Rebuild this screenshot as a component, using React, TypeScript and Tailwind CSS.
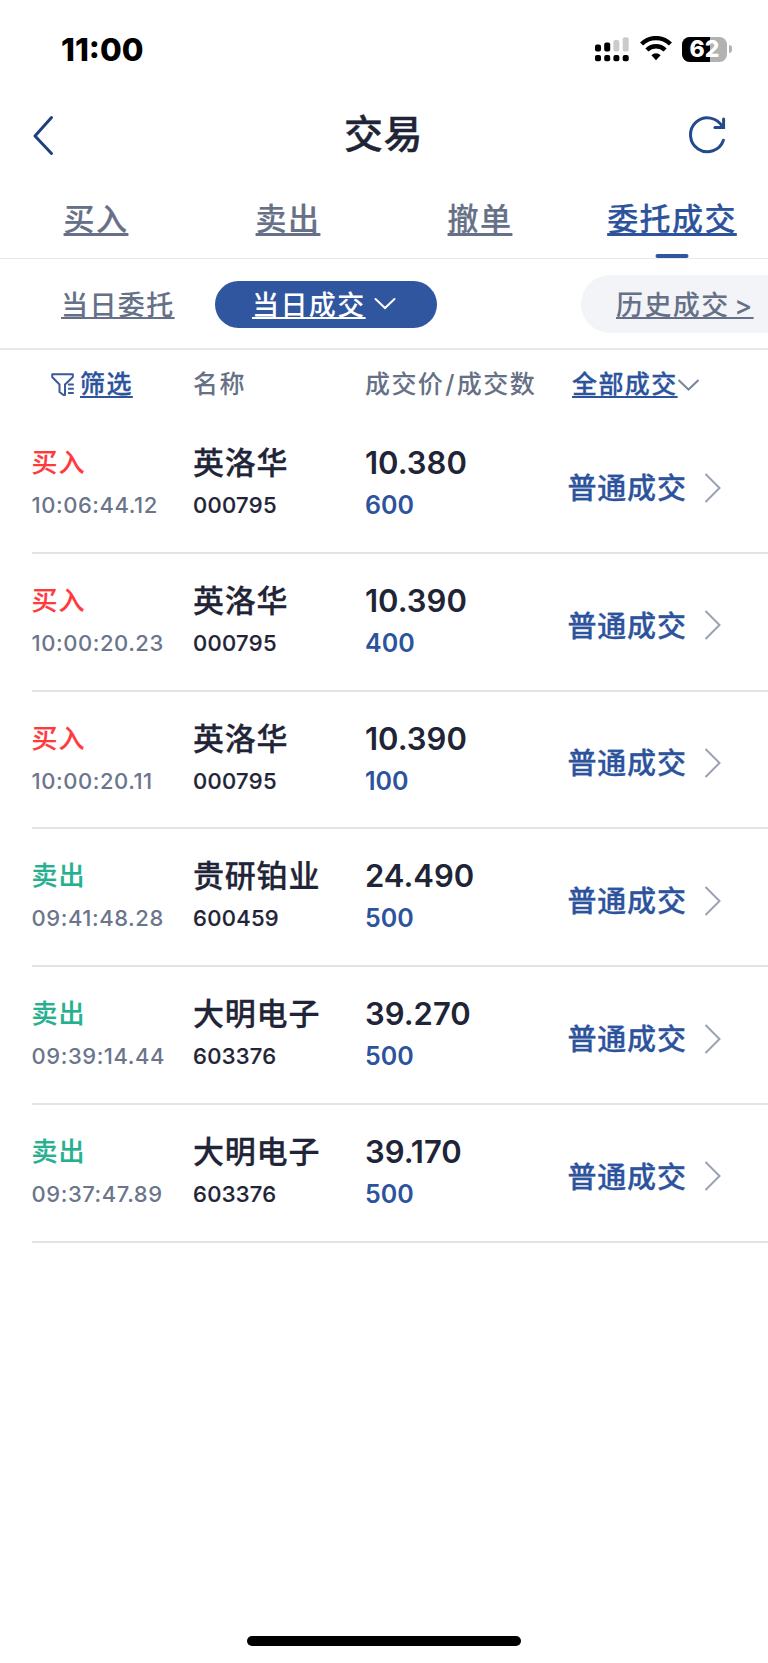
import clsx from 'clsx';

type Trade = {
  side: 'buy' | 'sell';
  time: string;
  name: string;
  code: string;
  price: string;
  amount: number;
};

const trades: Trade[] = [
  { side: 'buy', time: '10:06:44.12', name: '英洛华', code: '000795', price: '10.380', amount: 600 },
  { side: 'buy', time: '10:00:20.23', name: '英洛华', code: '000795', price: '10.390', amount: 400 },
  { side: 'buy', time: '10:00:20.11', name: '英洛华', code: '000795', price: '10.390', amount: 100 },
  { side: 'sell', time: '09:41:48.28', name: '贵研铂业', code: '600459', price: '24.490', amount: 500 },
  { side: 'sell', time: '09:39:14.44', name: '大明电子', code: '603376', price: '39.270', amount: 500 },
  { side: 'sell', time: '09:37:47.89', name: '大明电子', code: '603376', price: '39.170', amount: 500 },
];

const tabs = ['买入', '卖出', '撤单', '委托成交'];

function StatusBar() {
  return (
    <div className="flex h-[98px] items-center justify-between pl-[61px] pr-[36px]">
      <span className="pt-px text-[31.5px] font-extrabold leading-none text-black">11:00</span>
      <div className="flex items-center gap-[10.5px]">
        <svg width="34" height="26" viewBox="0 0 34 26">
          <rect x="0" y="8.5" width="6" height="7" rx="2" />
          <rect x="9.2" y="6.5" width="6" height="9" rx="2" />
          <rect x="18.4" y="4" width="6" height="11.5" rx="2" fill="#cbcbcb" />
          <rect x="27.7" y="1.2" width="6" height="14.3" rx="2" fill="#cbcbcb" />
          <rect x="0" y="19" width="6" height="6.3" rx="2" />
          <rect x="9.2" y="19" width="6" height="6.3" rx="2" />
          <rect x="18.4" y="19" width="6" height="6.3" rx="2" />
          <rect x="27.7" y="19" width="6" height="6.3" rx="2" />
        </svg>
        <svg width="32" height="26" viewBox="0 0 32 26" fill="none" stroke="#000" strokeWidth="4.4">
          <path d="M1.6 8a20.5 20.5 0 0 1 28.8 0" />
          <path d="M6.9 14a13 13 0 0 1 18.2 0" />
          <path d="M16 24.2l-4.6-5a6.5 6.5 0 0 1 9.2 0z" fill="#000" stroke="none" />
        </svg>
        <div className="flex items-center gap-[2px]">
          <div className="flex h-[25px] w-[45px] items-center justify-center rounded-[7.5px] bg-[linear-gradient(to_right,#000_62%,#b2b2b2_62%)] text-[23px] font-extrabold leading-none text-white">
            62
          </div>
          <div className="h-[8px] w-[3px] rounded-r-full bg-[#b2b2b2]" />
        </div>
      </div>
    </div>
  );
}

function Header() {
  return (
    <header className="grid h-[74px] grid-cols-[1fr_auto_1fr] items-center pl-[31px] pr-[40px]">
      <svg width="26" height="42" viewBox="0 0 26 42" fill="none" stroke="#1f3f7d" strokeWidth="3" strokeLinecap="round" strokeLinejoin="round">
        <path d="M20.5 3.5L4 22L20.5 39.5" />
      </svg>
      <h1 className="pb-[3px] pl-[8px] text-[39px] font-medium leading-none tracking-[0.5px] text-[#1f2437] [-webkit-text-stroke:0.4px]">
        交易
      </h1>
      <svg className="justify-self-end" width="42" height="42" viewBox="0 0 42 42" fill="none" stroke="#244a8c" strokeWidth="3" strokeLinecap="round">
        <path d="M37.4 26.2A16.9 16.9 0 1 1 36.4 13" />
        <path d="M37.6 5V13.5H28.9" />
      </svg>
    </header>
  );
}

function Tabs() {
  return (
    <nav className="flex h-[87px] border-b border-[#e7e8ec]">
      {tabs.map((tab) => {
        const active = tab === '委托成交';
        return (
          <div key={tab} className="relative flex w-[192px] shrink-0 justify-center pt-[24px]">
            <span
              className={clsx(
                'text-[31px] font-medium leading-[46px] tracking-[1.4px] underline decoration-[2.5px] underline-offset-[3px] [-webkit-text-stroke:0.2px] [text-decoration-skip-ink:none]',
                active ? 'text-[#2c539c]' : 'text-[#667086]',
              )}
            >
              {tab}
            </span>
            {active && (
              <i className="absolute bottom-0 left-1/2 h-[4px] w-[33px] -translate-x-1/2 rounded-[2px] bg-[#2f569f]" />
            )}
          </div>
        );
      })}
    </nav>
  );
}

function SubTabs() {
  return (
    <div className="flex h-[91px] items-center overflow-hidden border-b-2 border-[#e5e7ed] pl-[61px] pt-px text-[27px] font-medium tracking-[1.4px] text-[#667086]">
      <span className="w-[154px] shrink-0 pt-[5px] underline decoration-[2px] underline-offset-[2px] [text-decoration-skip-ink:none]">
        当日委托
      </span>
      <div className="flex h-[47px] w-[222px] shrink-0 items-center rounded-full bg-[#2f569f] pl-[37px] text-white">
        <span className="pt-[5px] underline decoration-[2px] underline-offset-[2px] [text-decoration-skip-ink:none]">
          当日成交
        </span>
        <svg className="ml-[8px]" width="22" height="14" viewBox="0 0 22 14" fill="none" stroke="currentColor" strokeWidth="2" strokeLinecap="round">
          <path d="M1.5 2L11 11L20.5 2" />
        </svg>
      </div>
      <div className="ml-[144px] flex h-[58px] w-[210px] shrink-0 items-center rounded-full bg-[#f3f4f7] pl-[35px]">
        <span className="pt-[5px] underline decoration-[2px] underline-offset-[2px] [text-decoration-skip-ink:none] [word-spacing:-4px]">
          历史成交 &gt;
        </span>
      </div>
    </div>
  );
}

function ListHeader() {
  return (
    <div className="flex h-[66px] items-center pt-[3px] text-[25px] font-medium tracking-[1.4px] text-[#667086]">
      <div className="flex w-[193px] items-center pl-[51px] text-[#2c539c]">
        <svg className="mr-[5px]" width="24" height="24" viewBox="0 0 24 24" fill="none" stroke="#3a5a98" strokeWidth="2" strokeLinecap="round" strokeLinejoin="round">
          <path d="M14 20V11.5L21.8 4V1.2H1.2V4L8.5 11.5V19L12.5 22H14V20" />
          <path d="M17.8 11.5H22M17.8 15.8H22M17.8 20H22" />
        </svg>
        <span className="underline decoration-[2px] underline-offset-[3px] [-webkit-text-stroke:0.3px] [text-decoration-skip-ink:none]">
          筛选
        </span>
      </div>
      <div className="w-[172px]">名称</div>
      <div className="w-[207px]">
        成交价<span className="px-[1px]">/</span>成交数
      </div>
      <div className="flex items-center whitespace-nowrap">
        <span className="text-[#2c539c] underline decoration-[2px] underline-offset-[3px] [-webkit-text-stroke:0.3px] [text-decoration-skip-ink:none]">
          全部成交
        </span>
        <svg width="21" height="14" viewBox="0 0 21 14" fill="none" stroke="#7d879b" strokeWidth="2">
          <path d="M0.5 2L10.5 11.5L20.5 2" />
        </svg>
      </div>
    </div>
  );
}

function TradeRow({ trade }: { trade: Trade }) {
  return (
    <li className="flex h-[137.75px] border-b-2 border-[#e2e3e6] pt-[23px] font-medium">
      <div className="w-[161.5px]">
        <div
          className={clsx(
            'text-[26px] leading-[47px] tracking-[1px] [-webkit-text-stroke:0.2px]',
            trade.side === 'buy' ? 'text-[#ff3a3d]' : 'text-[#27b08f]',
          )}
        >
          {trade.side === 'buy' ? '买入' : '卖出'}
        </div>
        <div className="text-[22px] leading-[39px] tracking-[0.55px] text-[#6b758b]">
          {trade.time}
        </div>
      </div>
      <div className="w-[172px] text-[#1f2437]">
        <div className="text-[31px] leading-[47px] tracking-[0.8px] [-webkit-text-stroke:0.3px]">
          {trade.name}
        </div>
        <div className="text-[22px] leading-[39px] tracking-[0.3px] [-webkit-text-stroke:0.2px]">
          {trade.code}
        </div>
      </div>
      <div className="w-[202.5px]">
        <div className="text-[31px] font-semibold leading-[47px] text-[#1f2437]">{trade.price}</div>
        <div className="text-[25px] font-semibold leading-[39px] text-[#2c539c]">{trade.amount}</div>
      </div>
      <div className="flex h-[97px] items-center text-[29px] tracking-[0.8px] text-[#2c539c] [-webkit-text-stroke:0.3px]">
        <span className="pt-[2px]">普通成交</span>
        <svg className="ml-[17px]" width="18" height="30" viewBox="0 0 18 30" fill="none" stroke="#9aa1b2" strokeWidth="2">
          <path d="M1.5 1L15.5 15L1.5 29" />
        </svg>
      </div>
    </li>
  );
}

export default function App() {
  return (
    <div className="flex h-[1663px] w-[768px] flex-col overflow-hidden bg-white font-[Inter,'Noto_Sans_CJK_SC',sans-serif]">
      <StatusBar />
      <Header />
      <Tabs />
      <SubTabs />
      <ListHeader />
      <ul className="pl-[31.5px]">
        {trades.map((trade) => (
          <TradeRow key={trade.time} trade={trade} />
        ))}
      </ul>
      <div className="mx-auto mb-[17px] mt-auto h-[10px] w-[274px] rounded-full bg-black" />
    </div>
  );
}
